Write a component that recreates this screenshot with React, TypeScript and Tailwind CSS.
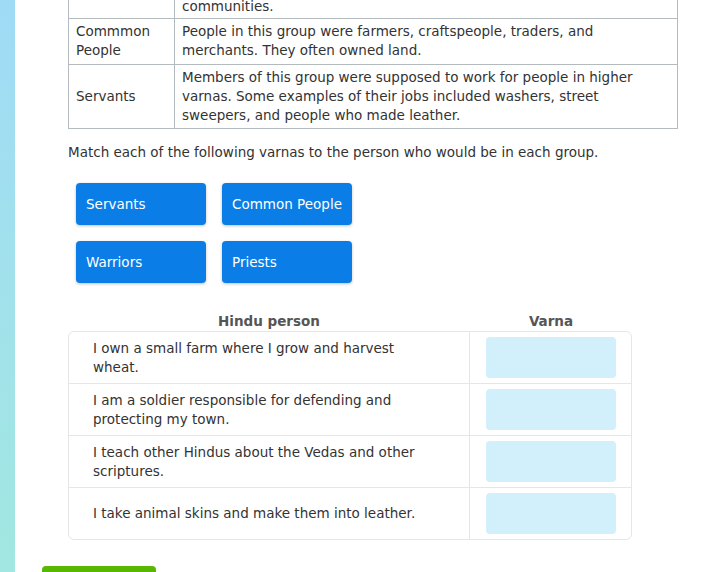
import React from 'react'

const varnas = ['Servants', 'Common People', 'Warriors', 'Priests']

const people = [
  'I own a small farm where I grow and harvest wheat.',
  'I am a soldier responsible for defending and protecting my town.',
  'I teach other Hindus about the Vedas and other scriptures.',
  'I take animal skins and make them into leather.',
]

export default function App() {
  return (
    <div className="min-h-[572px] h-[572px] overflow-hidden flex bg-white text-[13.5px] leading-[19px] text-[#333]" style={{ fontFamily: '"DejaVu Sans", Verdana, sans-serif' }}>
      <div className="w-[15px] shrink-0 bg-gradient-to-b from-[#a0dbf6] to-[#a2e7e1]" />

      <div className="flex-1 pl-[27px]">
        {/* reference table */}
        <table className="ml-[26px] mt-[-9px] w-[610px] border-collapse">
          <tbody>
            <tr>
              <td className="w-[106px] border border-[#b3bbbe] px-[7px] pt-[5px] pb-[2px]"></td>
              <td className="border border-[#b3bbbe] px-[7px] pt-[5px] pb-[2px]">communities.</td>
            </tr>
            <tr>
              <td className="border border-[#b3bbbe] px-[7px] pt-[3px] pb-[4px] align-middle">
                Commmon
                <br />
                People
              </td>
              <td className="border border-[#b3bbbe] px-[7px] pt-[3px] pb-[4px]">
                People in this group were farmers, craftspeople, traders, and
                <br />
                merchants. They often owned land.
              </td>
            </tr>
            <tr>
              <td className="border border-[#b3bbbe] px-[7px] pt-[3px] pb-[3px] align-middle">Servants</td>
              <td className="border border-[#b3bbbe] px-[7px] pt-[3px] pb-[3px]">
                Members of this group were supposed to work for people in higher
                <br />
                varnas. Some examples of their jobs included washers, street
                <br />
                sweepers, and people who made leather.
              </td>
            </tr>
          </tbody>
        </table>

        <p className="ml-[26px] mt-[14px]">
          Match each of the following varnas to the person who would be in each group.
        </p>

        {/* draggable answers */}
        <div className="ml-[34px] mt-[21px] grid grid-cols-[130px_130px] gap-4">
          {varnas.map((v) => (
            <div
              key={v}
              className="h-[42px] rounded-[4px] bg-[#0a7ee6] px-[10px] flex items-center whitespace-nowrap text-white shadow-[0_1px_3px_rgba(0,0,0,0.25)]"
            >
              {v}
            </div>
          ))}
        </div>

        {/* matching table */}
        <div className="ml-[26px] mt-[29px] w-[564px]">
          <div className="flex font-bold text-[#555]">
            <div className="w-[402px] text-center">Hindu person</div>
            <div className="flex-1 text-center">Varna</div>
          </div>
          <div className="border border-[#e6e6e6] rounded-[6px]">
            {people.map((p, i) => (
              <div key={i} className={`flex ${i > 0 ? 'border-t border-[#e6e6e6]' : ''}`}>
                <div className="w-[401px] border-r border-[#e6e6e6] pl-[24px] pr-[25px] flex items-center">
                  {p}
                </div>
                <div className="flex-1 flex justify-center py-[5px]">
                  <div className="w-[130px] h-[41px] rounded-[4px] bg-[#d1f0fb]" />
                </div>
              </div>
            ))}
          </div>
        </div>

        <div className="mt-[26px] w-[114px] h-[10px] rounded-t-[4px] bg-[#58b700]" />
      </div>
    </div>
  )
}
